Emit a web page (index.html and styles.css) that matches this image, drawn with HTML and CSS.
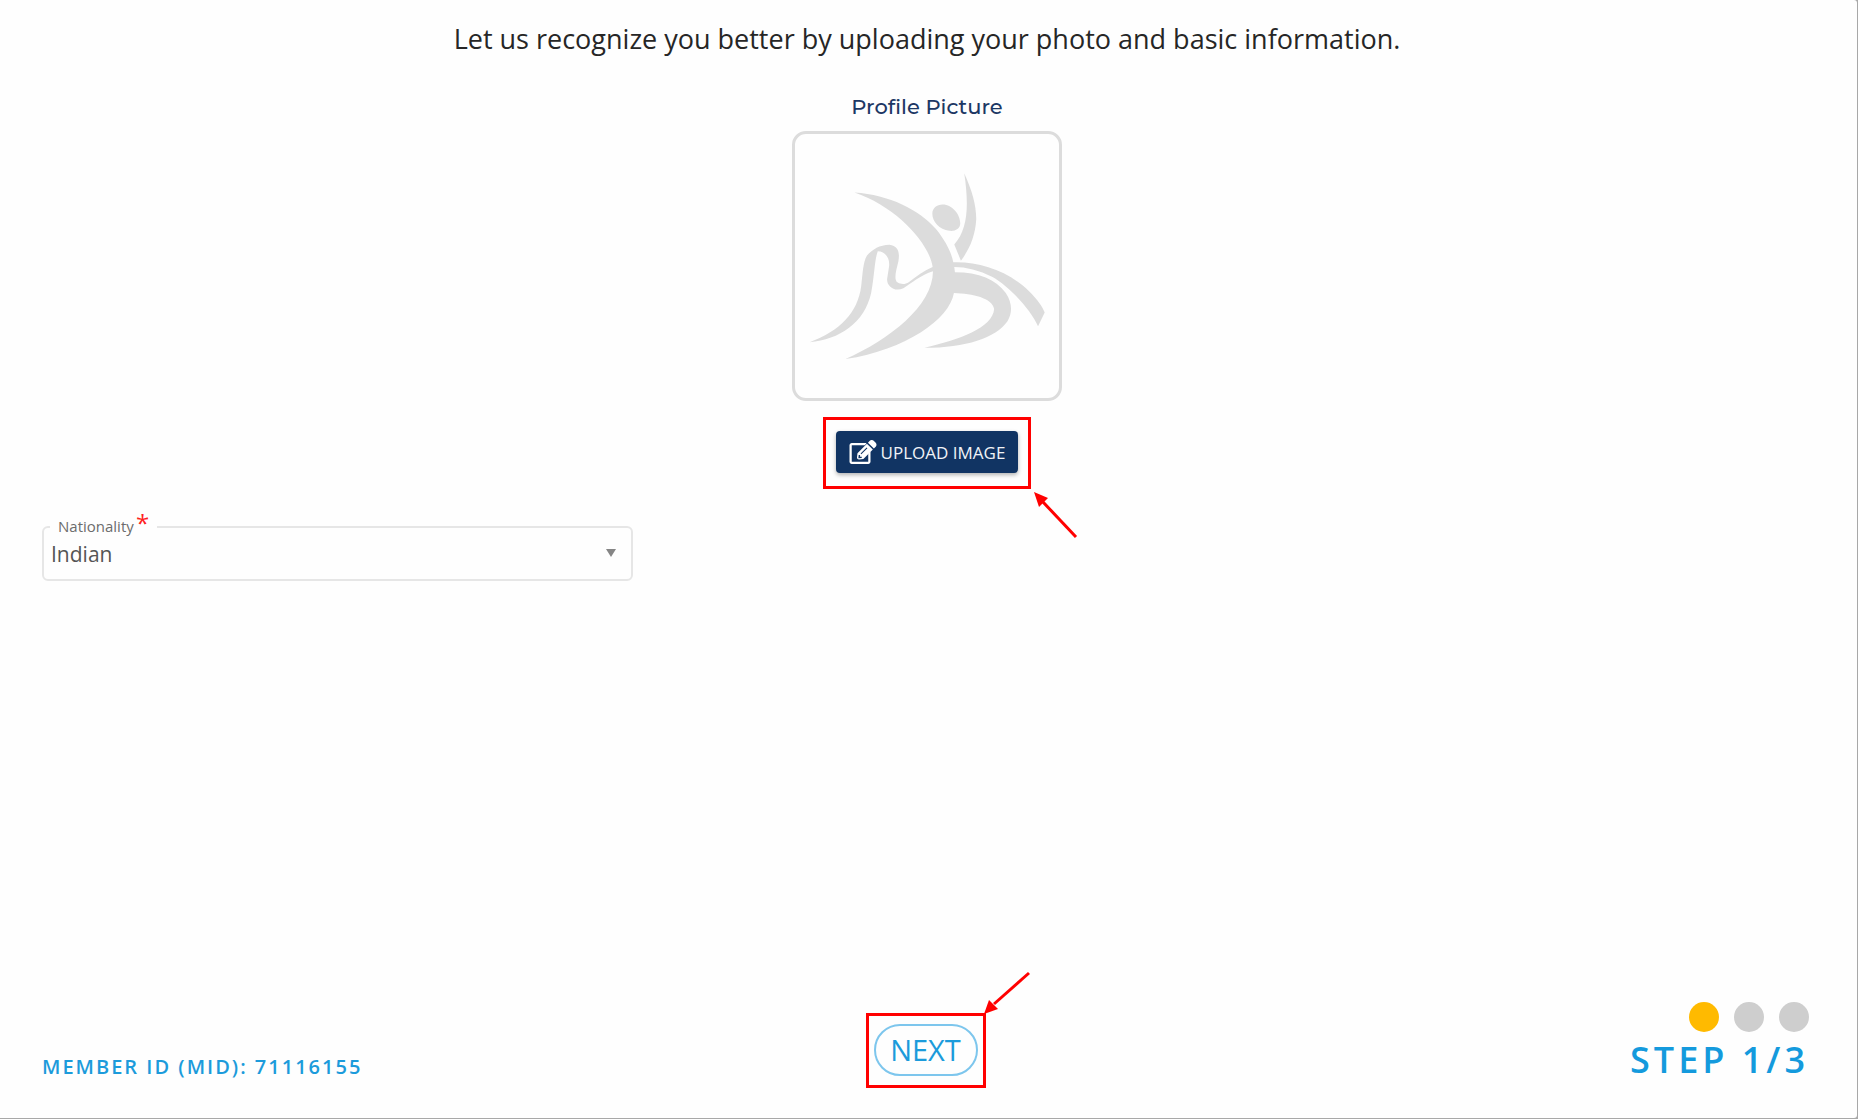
FILE: index.html
```html
<!DOCTYPE html>
<html lang="en">
<head>
    <meta charset="UTF-8">
    <meta name="viewport" content="width=device-width, initial-scale=1.0">
    <title>Basic Information</title>
    <link rel="stylesheet" href="styles.css">
</head>
<body>
    <form class="page">
        <h1>Let us recognize you better by uploading your photo and basic information.</h1>

        <div class="profile">
            <h2>Profile Picture</h2>
            <div class="avatar">
                <svg viewBox="47 42 792 794" aria-hidden="true">
                    <path d="M225 218C330 225 420 270 470 328C500 365 517 400 522 428C600 425 690 455 750 515C775 540 790 560 797 579L777 620C755 570 690 500 640 472C600 452 560 442 525 442L527 458C600 458 650 480 680 520C700 550 700 580 685 605C650 655 560 685 435 685C540 660 640 625 645 568C640 535 580 522 524 520C510 600 380 690 198 719C330 660 460 560 461 455C425 466 395 492 372 506C345 518 322 500 323 478L329 440C332 412 315 395 295 395C285 420 285 470 275 520C255 610 180 660 90 668C180 635 235 580 245 500C250 460 250 430 262 408C280 388 300 376 330 375C355 378 362 395 357 425C350 455 342 480 355 489C365 495 378 495 388 488C410 470 435 453 460 442C450 370 350 260 225 218Z"/>
                    <path d="M555 160C580 215 592 260 591 300C588 350 570 390 545 423L525 374C565 330 570 260 555 160Z"/>
                    <path d="M490 254C520 254 543 285 543 310C543 330 525 335 510 333C480 330 459 305 459 282C459 265 472 254 490 254Z"/>
                </svg>
            </div>
            <div class="marker marker-upload">
                <button type="button" class="upload-button">
                    <svg viewBox="0 0 576 512" aria-hidden="true">
                        <path d="M402 284l32-32c5-5 14-1 14 6v206c0 26-22 48-48 48H48c-26 0-48-22-48-48V112c0-26 22-48 48-48h302c7 0 11 9 6 14l-32 32c-2 1-4 2-6 2H48v352h352V290c0-2 1-4 2-6z"/>
                        <path d="M498 205L296 406l-90 10c-26 3-49-19-46-46l10-90L371 79zM394 56l39-39c23-23 60-23 83 0l43 43c23 23 23 60 0 83l-39 39z"/>
                        <path class="cut" d="M196 318l-7 72 72-7v-28h-36v-37zM236 290l130-130 16 16-130 130z"/>
                    </svg>
                    UPLOAD IMAGE
                </button>
                <svg class="arrow arrow-upload" viewBox="0 0 43 46" aria-hidden="true">
                    <line x1="9" y1="10" x2="42" y2="45"/>
                    <polygon points="0,0 14,6 5,15"/>
                </svg>
            </div>
        </div>

        <div class="field">
            <label for="nationality">Nationality <span class="required">*</span></label>
            <select id="nationality">
                <option>Indian</option>
            </select>
            <svg class="caret" viewBox="0 0 10 8" aria-hidden="true"><polygon points="0,0 10,0 5,8"/></svg>
        </div>

        <div class="footer">
            <div class="member-id">MEMBER ID (MID): 71116155</div>
            <div class="marker marker-next">
                <button type="button" class="next-button">NEXT</button>
                <svg class="arrow arrow-next" viewBox="0 0 46 43" aria-hidden="true">
                    <line x1="10" y1="32" x2="45" y2="1"/>
                    <polygon points="0,42 5,28 14,37"/>
                </svg>
            </div>
            <div class="steps">
                <div class="dots">
                    <span class="dot active"></span>
                    <span class="dot"></span>
                    <span class="dot"></span>
                </div>
                <div class="step-text">STEP 1/3</div>
            </div>
        </div>
    </form>
</body>
</html>
```

FILE: styles.css
```css
* {
    box-sizing: border-box;
}

body {
    margin: 0;
    font-family: "Open Sans", "Noto Sans", sans-serif;
    background-color: #a8a8a8;
}

.page {
    display: flex;
    flex-direction: column;
    min-height: calc(100vh - 1px);
    margin: 0 1px 1px 0;
    padding: 20px 3px 30px 0;
    background-color: #fefefe;
    border-radius: 0 3px 3px 0;
}

h1 {
    margin: 0;
    font-size: 27px;
    line-height: 38px;
    font-weight: 500;
    color: #262626;
    text-align: center;
}

.profile {
    display: flex;
    flex-direction: column;
    align-items: center;
    margin-top: 36px;
}

h2 {
    margin: 0 0 11px;
    font-family: Montserrat, Inter, sans-serif;
    font-size: 21px;
    line-height: 26px;
    font-weight: 500;
    color: #1c3764;
}

.avatar {
    width: 270px;
    height: 270px;
    border: 3px solid #dcdcdc;
    border-radius: 14px;
}

.avatar svg {
    display: block;
    width: 100%;
    height: 100%;
    fill: #dcdcdc;
}

/* Red callouts around the two buttons */
.marker {
    position: relative;
    border: 3px solid #ff0000;
}

.marker-upload {
    margin-top: 16px;
    padding: 11px 10px 13px;
}

.upload-button {
    display: flex;
    align-items: center;
    gap: 4px;
    height: 42px;
    padding: 0 13px;
    border: none;
    border-radius: 4px;
    background-color: #113463;
    color: #f0f3f7;
    font-family: inherit;
    font-size: 17px;
    box-shadow: 0 2px 4px rgba(0, 0, 0, 0.3);
    cursor: pointer;
}

.upload-button svg {
    width: 28px;
    height: 24px;
    fill: #fff;
}

.upload-button .cut {
    fill: #113463;
}

.arrow {
    position: absolute;
    overflow: visible;
}

.arrow line {
    stroke: #ff0000;
    stroke-width: 3;
}

.arrow polygon {
    fill: #ff0000;
}

.arrow-upload {
    top: 72px;
    left: 208px;
    width: 43px;
    height: 46px;
}

.arrow-next {
    bottom: 70px;
    left: 115px;
    width: 46px;
    height: 43px;
}

.field {
    position: relative;
    width: 591px;
    max-width: calc(100% - 84px);
    margin: 37px 42px 0;
}

.field label {
    position: absolute;
    top: -10px;
    left: 8px;
    padding: 0 8px;
    background-color: #fefefe;
    font-size: 15px;
    line-height: 20px;
    color: #6c6c6c;
}

.required {
    position: absolute;
    top: -3px;
    left: 86px;
    padding-right: 8px;
    background-color: #fefefe;
    font-size: 24px;
    line-height: 20px;
    color: #ff1f1f;
}

.field select {
    display: block;
    width: 100%;
    height: 55px;
    padding: 0 32px 0 7px;
    border: 2px solid #e6e6e6;
    border-radius: 6px;
    background-color: #fefefe;
    appearance: none;
    font-family: inherit;
    font-size: 21px;
    color: #555;
}

.caret {
    position: absolute;
    top: 23px;
    right: 17px;
    width: 10px;
    height: 8px;
    fill: #858585;
    pointer-events: none;
}

.footer {
    display: grid;
    grid-template-columns: 1fr auto 1fr;
    align-items: end;
    margin-top: auto;
    padding: 0 45px 0 42px;
}

.member-id {
    padding-bottom: 6px;
    font-size: 20px;
    line-height: 30px;
    font-weight: 600;
    letter-spacing: 2px;
    color: #1c9bdb;
}

.marker-next {
    padding: 8px 5px 9px;
}

.next-button {
    display: block;
    width: 104px;
    height: 52px;
    padding: 0;
    border: 2px solid #7dc6ed;
    border-radius: 26px;
    background-color: #fefefe;
    color: #1c9bdb;
    font-family: inherit;
    font-size: 29px;
    line-height: 40px;
    cursor: pointer;
}

.steps {
    display: flex;
    flex-direction: column;
    align-items: flex-end;
}

.dots {
    display: flex;
    gap: 15px;
}

.dot {
    width: 30px;
    height: 30px;
    border-radius: 50%;
    background-color: #cecece;
}

.dot.active {
    background-color: #ffba00;
}

.step-text {
    font-size: 36px;
    line-height: 56px;
    font-weight: 600;
    letter-spacing: 4px;
    color: #149add;
}
```
